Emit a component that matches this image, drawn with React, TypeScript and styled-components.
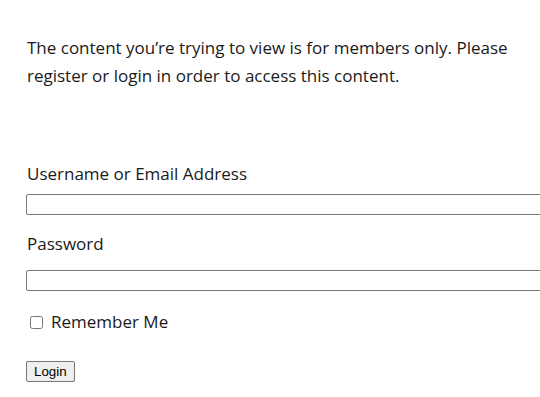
import React from "react";
import styled, { createGlobalStyle } from "styled-components";

const GlobalStyle = createGlobalStyle`
  html, body {
    margin: 0;
    background: #ffffff;
    overflow: hidden;
  }
  body {
    font-family: "Open Sans", "Noto Sans", sans-serif;
    color: #1a1a1a;
  }
`;

const Page = styled.div`
  padding: 34px 0 0 26px;
  width: 620px;
`;

const Notice = styled.p`
  margin: 0 0 0 1px;
  font-size: 17px;
  line-height: 28px;
  width: 500px;
`;

const LoginForm = styled.form`
  margin-top: 72px;
  display: flex;
  flex-direction: column;
`;

const FieldLabel = styled.label`
  display: block;
  margin-left: 1px;
  font-size: 17px;
  line-height: 24px;
`;

const TextInput = styled.input<{ $before: number; $after?: number }>`
  display: block;
  box-sizing: border-box;
  width: 600px;
  height: 21px;
  margin: ${(p) => p.$before}px 0 ${(p) => p.$after ?? 0}px 0;
  border: 1px solid #767676;
  border-radius: 2px;
  background: #fff;
  padding: 1px 2px;
`;

const RememberRow = styled.label`
  display: flex;
  align-items: center;
  gap: 8px;
  margin: 19px 0 0 4px;
  font-size: 17px;
  line-height: 24px;
`;

const Check = styled.input`
  margin: 0;
  width: 13px;
  height: 13px;
`;

const LoginButton = styled.button`
  align-self: flex-start;
  margin-top: 27px;
  font-family: "Liberation Sans", Arial, sans-serif;
  font-size: 13.33px;
  padding: 1px 7px;
  height: 21px;
  border: 1px solid #767676;
  border-radius: 2px;
  background: #efefef;
  color: #000;
`;

export default function App() {
  return (
    <>
      <GlobalStyle />
      <Page>
        <Notice>
          The content you’re trying to view is for members only. Please register or
          login in order to access this content.
        </Notice>
        <LoginForm onSubmit={(e) => e.preventDefault()}>
          <FieldLabel htmlFor="user">Username or Email Address</FieldLabel>
          <TextInput id="user" type="text" $before={8} $after={17} />
          <FieldLabel htmlFor="pass">Password</FieldLabel>
          <TextInput id="pass" type="password" $before={14} />
          <RememberRow>
            <Check type="checkbox" />
            Remember Me
          </RememberRow>
          <LoginButton type="submit">Login</LoginButton>
        </LoginForm>
      </Page>
    </>
  );
}
